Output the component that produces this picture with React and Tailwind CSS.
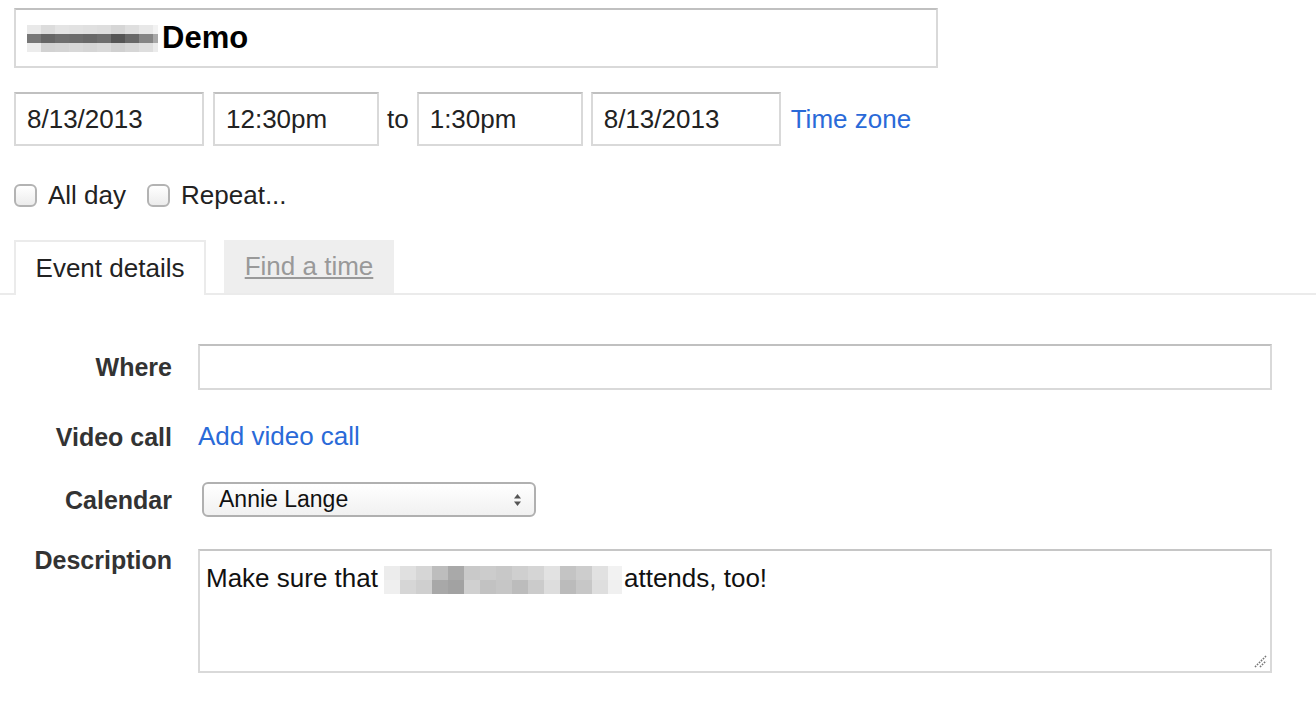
import { useState } from 'react';

const FONT = { fontFamily: '"Liberation Sans", Arial, sans-serif' };

function Mosaic({ cols, rows, cell }) {
  return (
    <span className="inline-flex flex-col align-middle">
      {rows.map((row, r) => (
        <span key={r} className="flex">
          {row.map((c, i) => (
            <span key={i} style={{ width: cols[i], height: cell, background: c }} />
          ))}
        </span>
      ))}
    </span>
  );
}

function Box({ children, className = '' }) {
  return (
    <div className={`border-2 border-[#d9d9d9] border-t-[#c0c0c0] bg-white flex items-center ${className}`}>
      {children}
    </div>
  );
}

function Check({ label }) {
  return (
    <label className="flex items-center gap-[11px]">
      <span className="w-[23px] h-[23px] rounded-[6px] border-2 border-[#b3b3b3] bg-gradient-to-b from-white to-[#ececec]" />
      <span className="text-[26px] leading-[30px] text-[#222]">{label}</span>
    </label>
  );
}

function Row({ label, children, align = 'center', className = '', labelClass = '' }) {
  return (
    <div className={`flex ${align === 'start' ? 'items-start' : 'items-center'} ${className}`}>
      <div className={`w-[172px] text-right font-bold text-[25px] leading-[30px] text-[#333] shrink-0 ${labelClass}`}>{label}</div>
      <div className="ml-[26px] flex-1">{children}</div>
    </div>
  );
}

export default function App() {
  const [tab] = useState('details');

  const titleCols = [14, 14, 14, 14, 14, 14, 14, 14, 14, 5];
  const titleRows = [
    ['#e9e9e9', '#dcdcdc', '#e4e4e4', '#e2e2e2', '#e0e0e0', '#dedede', '#d6d6d6', '#dfdfdf', '#e8e8e8', '#f2f2f2'],
    ['#777', '#666', '#6e6e6e', '#6c6c6c', '#686868', '#6e6e6e', '#555', '#686868', '#858585', '#a8a8a8'],
    ['#ececec', '#d2d2d2', '#d4d4d4', '#d8d8d8', '#d5d5d5', '#d9d9d9', '#d0d0d0', '#d6d6d6', '#dedede', '#ebebeb'],
  ];
  const descCols = [16, 16, 16, 16, 16, 16, 16, 16, 16, 16, 16, 16, 16, 16, 14];
  const descRows = [
    ['#ececec', '#e0e0e0', '#d6d6d6', '#bdbdbd', '#a9a9a9', '#c9c9c9', '#cccccc', '#c8c8c8', '#cfcfcf', '#d5d5d5', '#e2e2e2', '#c4c4c4', '#cdcdcd', '#e1e1e1', '#f2f2f2'],
    ['#efefef', '#d6d6d6', '#cfcfcf', '#a8a8a8', '#a2a2a2', '#d0d0d0', '#c2c2c2', '#c6c6c6', '#bcbcbc', '#cbcbcb', '#dddddd', '#bbbbbb', '#c7c7c7', '#dedede', '#f0f0f0'],
  ];

  return (
    <div className="w-[1316px] h-[702px] bg-white overflow-hidden text-[#222]" style={FONT}>
      {/* Title */}
      <div className="pl-[14px] pt-[8px]">
        <Box className="w-[924px] h-[60px] pl-[11px] gap-[4px]">
          <Mosaic cols={titleCols} rows={titleRows} cell={9} />
          <span className="font-bold text-[31px] text-black">Demo</span>
        </Box>
      </div>

      {/* Date / time */}
      <div className="pl-[14px] mt-[24px] flex items-center text-[26px]">
        <Box className="w-[190px] h-[54px] pl-[11px]">8/13/2013</Box>
        <Box className="w-[166px] h-[54px] pl-[11px] ml-[9px]">12:30pm</Box>
        <span className="ml-[8px] mr-[8px]">to</span>
        <Box className="w-[166px] h-[54px] pl-[11px]">1:30pm</Box>
        <Box className="w-[190px] h-[54px] pl-[11px] ml-[8px]">8/13/2013</Box>
        <span className="ml-[10px] text-[#2a6ad8]">Time zone</span>
      </div>

      {/* Checkboxes */}
      <div className="pl-[14px] mt-[34px] flex items-center gap-[21px]">
        <Check label="All day" />
        <Check label="Repeat..." />
      </div>

      {/* Tabs */}
      <div className="mt-[30px] pl-[14px] flex items-end border-b-2 border-[#ebebeb] h-[55px]">
        <div
          className={`w-[192px] h-[55px] border-2 border-b-0 border-[#ebebeb] bg-white text-[26px] flex items-center justify-center -mb-[2px] ${
            tab === 'details' ? 'text-[#222]' : ''
          }`}
        >
          Event details
        </div>
        <div className="ml-[18px] w-[170px] h-[53px] bg-[#eeeeee] text-[26px] text-[#999] underline flex items-center justify-center">
          Find a time
        </div>
      </div>

      {/* Details */}
      <div className="mt-[49px] pr-[44px] flex flex-col">
        <Row label="Where">
          <Box className="h-[46px] w-[1074px]" />
        </Row>
        <Row label="Video call" className="mt-[31px]">
          <span className="text-[26px] leading-[30px] text-[#2a6ad8]">Add video call</span>
        </Row>
        <Row label="Calendar" className="mt-[30px]">
          <div className="ml-[4px] w-[334px] h-[35px] rounded-[6px] border-2 border-[#b0b0b0] bg-gradient-to-b from-white to-[#f1f1f1] flex items-center justify-between pl-[15px] pr-[12px]">
            <span className="text-[23px] text-[#111]">Annie Lange</span>
            <svg width="9" height="14" viewBox="0 0 9 14">
              <path d="M4.5 1 L8 5.5 L1 5.5 Z" fill="#555" />
              <path d="M4.5 13 L8 8.5 L1 8.5 Z" fill="#555" />
            </svg>
          </div>
        </Row>
        <Row label="Description" align="start" className="mt-[32px]" labelClass="-mt-[4px]">
          <div className="relative w-[1074px] h-[124px] border-2 border-[#d9d9d9] border-t-[#c6c6c6] bg-white pl-[6px] pt-[8px]">
            <div className="flex items-center text-[26px] text-[#111]">
              <span>Make sure that</span>
              <span className="ml-[6px] mr-[2px]">
                <Mosaic cols={descCols} rows={descRows} cell={14} />
              </span>
              <span>attends, too!</span>
            </div>
            <svg className="absolute right-[3px] bottom-[3px]" width="14" height="14" viewBox="0 0 14 14">
              <path d="M2 13 L13 2 M7 13 L13 7" stroke="#777" strokeWidth="1.6" strokeDasharray="1.6 1.2" />
            </svg>
          </div>
        </Row>
      </div>
    </div>
  );
}
